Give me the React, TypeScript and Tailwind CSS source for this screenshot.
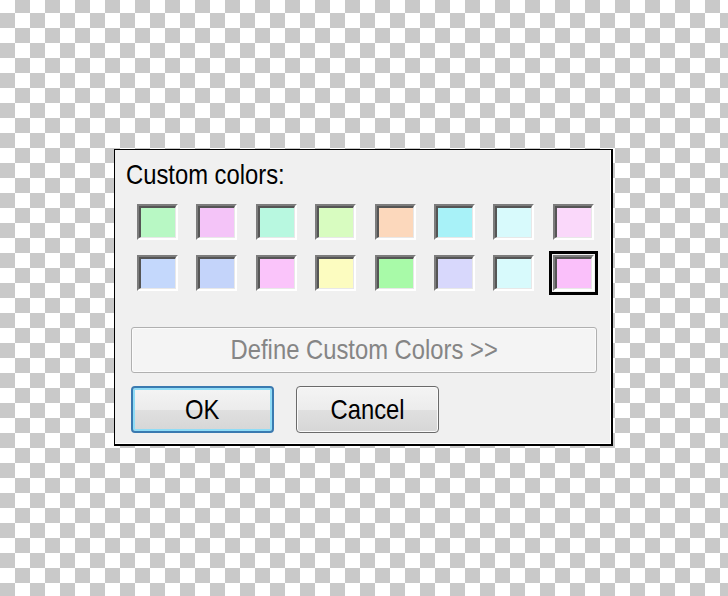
import React from "react";

const row1 = ["#b8f8c4", "#f4c4f8", "#b8f8e0", "#d8fcc0", "#fcd8bc", "#a8f2f8", "#d8fafc", "#fad8fa"];
const row2 = ["#c4d8fc", "#c4d4fa", "#fac4fa", "#fcfcc0", "#a8faa8", "#d8d8fc", "#d8fafc", "#fac0fa"];

function Swatch({ color, selected }: { color: string; selected?: boolean }) {
  return (
    <div
      className={
        "w-[41px] h-[36px] border-t-2 border-l-2 border-t-[#7c7c7c] border-l-[#7c7c7c] border-r-2 border-b-2 border-r-white border-b-white " +
        (selected ? "outline-[3px] outline-solid outline-black outline-offset-[1px]" : "")
      }
    >
      <div
        className="w-full h-full border-t-2 border-l-2 border-t-[#555555] border-l-[#555555] border-r border-b border-r-[#e8e8e8] border-b-[#e8e8e8]"
        style={{ backgroundColor: color }}
      />
    </div>
  );
}

export default function App() {
  return (
    <div
      className="w-[728px] h-[596px] pl-[114px] pt-[149px] bg-[conic-gradient(#c9c9c9_25%,#ffffff_0_50%,#c9c9c9_0_75%,#ffffff_0)] bg-[length:30px_30px] bg-[position:0px_-2px]"
      style={{ fontFamily: '"Liberation Sans", Arial, sans-serif' }}
    >
      <div className="w-[499px] h-[297px] bg-[#f0f0f0] border-l border-t border-r-2 border-b-2 border-black shadow-[inset_-1px_-1px_0_#ffffff] pt-[11px] flex flex-col">
        <div className="ml-[11px] h-[27px] text-[28px] leading-[27px] text-black">
          <span className="inline-block origin-left scale-x-[0.85] whitespace-nowrap">Custom colors:</span>
        </div>
        <div className="ml-[22px] mt-[16px] grid grid-cols-[repeat(8,41px)] grid-rows-[36px_36px] gap-x-[18.4px] gap-y-[14.7px]">
          {row1.map((c, i) => (
            <Swatch key={"a" + i} color={c} />
          ))}
          {row2.map((c, i) => (
            <Swatch key={"b" + i} color={c} selected={i === 7} />
          ))}
        </div>
        <div className="ml-[16px] mt-[36px] w-[466px] h-[46px] rounded-[3px] border border-[#b0b0b0] bg-[#f4f4f4] shadow-[inset_0_0_0_1px_#fbfbfb] flex items-center justify-center text-[28px] leading-[27px] text-[#858585]">
          <span className="inline-block scale-x-[0.85] whitespace-nowrap">Define Custom Colors &gt;&gt;</span>
        </div>
        <div className="ml-[16px] mt-[13px] flex gap-[22px]">
          <div className="w-[143px] h-[47px] rounded-[4px] border-2 border-[#3a7ab0] shadow-[inset_0_0_0_2px_#8fdcf6] bg-[linear-gradient(#f4f4f4,#ececec_50%,#e0e0e0_50%,#d6d6d6)] flex items-center justify-center text-[28px] leading-[27px] text-black">
            <span className="inline-block scale-x-[0.85]">OK</span>
          </div>
          <div className="w-[143px] h-[47px] rounded-[4px] border-[1.5px] border-[#6a6a6a] shadow-[inset_0_0_0_1px_#fafafa] bg-[linear-gradient(#f4f4f4,#ececec_50%,#e0e0e0_50%,#d6d6d6)] flex items-center justify-center text-[28px] leading-[27px] text-black">
            <span className="inline-block scale-x-[0.85]">Cancel</span>
          </div>
        </div>
      </div>
    </div>
  );
}
